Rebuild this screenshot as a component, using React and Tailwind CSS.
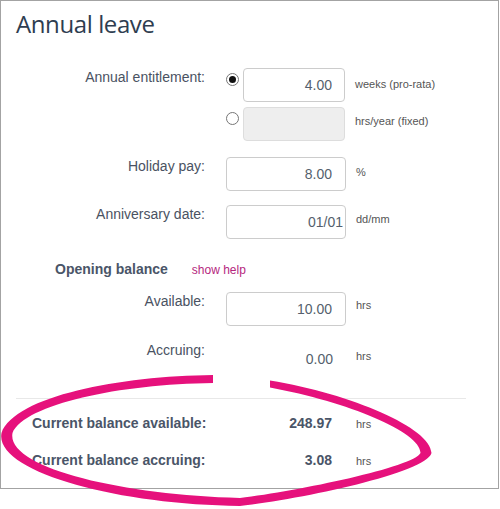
import React from "react";

const LABEL = "w-[204px] shrink-0 text-right text-[14px] leading-[18px] text-[#4a5262]";
const INPUT_BASE =
  "h-[34px] rounded-[4px] border text-right text-[14px] text-[#555f6d] outline-none";
const INPUT = `${INPUT_BASE} w-[120px] border-[#cccccc] bg-white ml-[21px]`;
const UNITS = "text-[11px] leading-[14px] text-[#555555]";

function Radio({ checked }) {
  return (
    <div className="mt-[5px] flex h-[13px] w-[13px] shrink-0 items-center justify-center rounded-full border border-[#767676] bg-white">
      {checked && <div className="h-[7px] w-[7px] rounded-full bg-[#111111]" />}
    </div>
  );
}

export default function App() {
  return (
    <div
      className="relative h-[509px] w-[500px] bg-white"
      style={{ fontFamily: '"Liberation Sans", Arial, sans-serif' }}
    >
      <div className="h-[489px] w-[499px] border border-[#a3a3a3] bg-white">
        <h1
          className="pl-[15px] pt-[7px] text-[24px] leading-[32px] tracking-[-0.4px] text-[#2e3d50]"
          style={{ fontFamily: '"Open Sans", "Noto Sans", sans-serif' }}
        >
          Annual leave
        </h1>

        {/* Annual entitlement */}
        <div className="mt-[28px] flex h-[34px] items-start">
          <div className={LABEL}>Annual entitlement:</div>
          <div className="ml-[21px]">
            <Radio checked />
          </div>
          <input
            readOnly
            defaultValue="4.00"
            className={`${INPUT_BASE} ml-[4px] w-[102px] border-[#cccccc] bg-white pr-[12px]`}
          />
          <div className={`${UNITS} ml-[10px] mt-[9px]`}>weeks (pro-rata)</div>
        </div>
        <div className="mt-[5px] flex h-[34px] items-start">
          <div className={LABEL}></div>
          <div className="ml-[21px]">
            <Radio />
          </div>
          <input
            readOnly
            disabled
            defaultValue=""
            className={`${INPUT_BASE} ml-[4px] w-[102px] border-[#dddddd] bg-[#eeeeee] pr-[12px]`}
          />
          <div className={`${UNITS} ml-[10px] mt-[7px]`}>hrs/year (fixed)</div>
        </div>

        {/* Holiday pay */}
        <div className="mt-[16px] flex h-[34px] items-start">
          <div className={LABEL}>Holiday pay:</div>
          <input readOnly defaultValue="8.00" className={`${INPUT} pr-[13px]`} />
          <div className={`${UNITS} ml-[10px] mt-[8px]`}>%</div>
        </div>

        {/* Anniversary date */}
        <div className="mt-[14px] flex h-[34px] items-start">
          <div className={LABEL}>Anniversary date:</div>
          <input readOnly defaultValue="01/01" className={`${INPUT} pr-[2px]`} />
          <div className={`${UNITS} ml-[10px] mt-[7px]`}>dd/mm</div>
        </div>

        {/* Opening balance */}
        <div className="mt-[20px] flex items-baseline pl-[54px]">
          <div className="text-[14px] font-bold leading-[20px] text-[#4a5568]">Opening balance</div>
          <a className="ml-[24px] cursor-pointer text-[12px] leading-[20px] text-[#b5267e]">show help</a>
        </div>

        <div className="mt-[12px] flex h-[34px] items-start">
          <div className={LABEL}>Available:</div>
          <input readOnly defaultValue="10.00" className={`${INPUT} pr-[13px]`} />
          <div className={`${UNITS} ml-[10px] mt-[6px]`}>hrs</div>
        </div>

        <div className="mt-[15px] flex h-[34px] items-start">
          <div className={LABEL}>Accruing:</div>
          <div className="ml-[21px] flex h-[34px] w-[120px] items-center justify-end pr-[13px] pt-[2px] text-[14px] text-[#555f6d]">
            0.00
          </div>
          <div className={`${UNITS} ml-[10px] mt-[8px]`}>hrs</div>
        </div>

        <div className="ml-[15px] mt-[23px] h-px w-[450px] bg-[#e8e8e8]" />

        <div className="mt-[14px] flex items-baseline">
          <div className="w-[250px] pl-[31px] text-[14px] font-bold leading-[20px] text-[#4a5568]">
            Current balance available:
          </div>
          <div className="w-[81px] text-right text-[14px] font-bold leading-[20px] text-[#4a5568]">248.97</div>
          <div className={`${UNITS} ml-[24px]`}>hrs</div>
        </div>
        <div className="mt-[17px] flex items-baseline">
          <div className="w-[250px] pl-[31px] text-[14px] font-bold leading-[20px] text-[#4a5568]">
            Current balance accruing:
          </div>
          <div className="w-[81px] text-right text-[14px] font-bold leading-[20px] text-[#4a5568]">3.08</div>
          <div className={`${UNITS} ml-[24px]`}>hrs</div>
        </div>
      </div>

      {/* hand-drawn highlight */}
      <svg
        className="pointer-events-none absolute left-0 top-0"
        width="500"
        height="509"
        viewBox="0 0 500 509"
      >
        <path
          d="M 213 375 C 120 376, 15 396, 1.5 433 C -6 472, 118 505, 240 506 C 302 499, 426 473, 431.5 453 C 431 428, 352 394, 270 380.5 L 270 387.5 C 348 402, 421 432, 420.5 453 C 414 467, 298 491, 240 498 C 122 495, 6 468, 12.5 433 C 25 404, 120 384, 213 383 Z"
          fill="#e6117c"
        />
      </svg>
    </div>
  );
}
